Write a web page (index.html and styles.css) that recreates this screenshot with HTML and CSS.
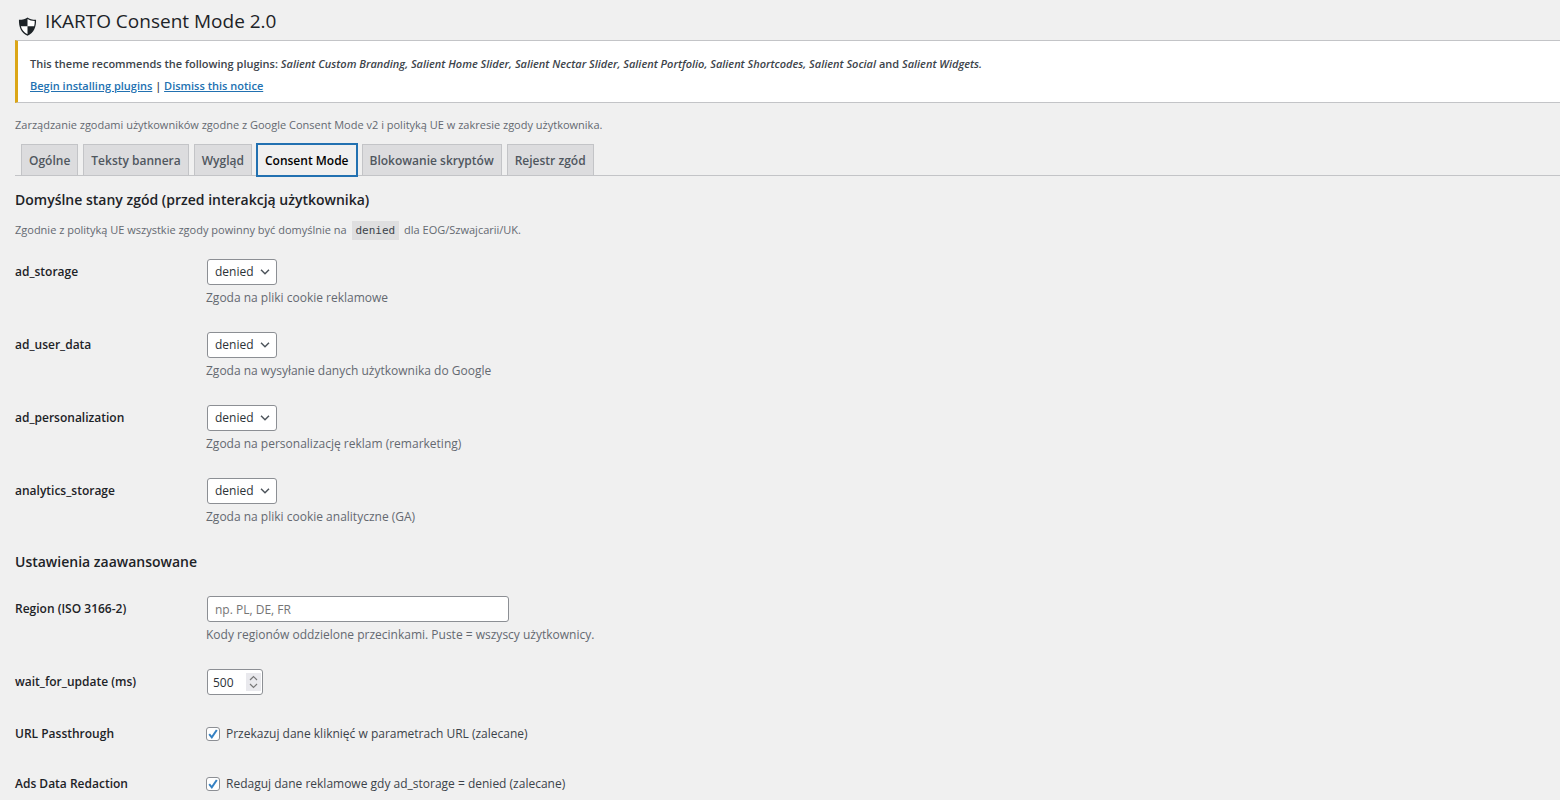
FILE: index.html
```html
<!DOCTYPE html>
<html lang="pl">
<head>
	<meta charset="utf-8">
	<title>IKARTO Consent Mode 2.0</title>
	<link rel="stylesheet" href="styles.css">
</head>
<body>
<div class="wrap">
	<h1 class="title">
		<svg class="shield" viewBox="0 0 20 20" aria-hidden="true">
			<path fill="#1d2327" d="M10 .5C8 2.200 5 3 1 3 .8 10.500 3 16.500 10 19.800 17 16.500 19.200 10.500 19 3 15 3 12 2.200 10 .5z"/>
			<path fill="#fff" d="M10 2.200c2 1.300 4.500 1.900 7.600 2 0 1.900-.1 3.800-.6 5.600h-7zM3 9.800h7v8.300C6.200 16.200 3.900 13.500 3 9.800z"/>
		</svg>
		IKARTO Consent Mode 2.0
	</h1>

	<div class="notice">
		<p>This theme recommends the following plugins: <em>Salient Custom Branding, Salient Home Slider, Salient Nectar Slider, Salient Portfolio, Salient Shortcodes, Salient Social</em> and <em>Salient Widgets.</em></p>
		<p><a href="#">Begin installing plugins</a> | <a href="#">Dismiss this notice</a></p>
	</div>

	<p class="intro">Zarządzanie zgodami użytkowników zgodne z Google Consent Mode v2 i polityką UE w zakresie zgody użytkownika.</p>

	<nav class="tabs">
		<a href="#" class="tab">Ogólne</a>
		<a href="#" class="tab">Teksty bannera</a>
		<a href="#" class="tab">Wygląd</a>
		<a href="#" class="tab tab-active">Consent Mode</a>
		<a href="#" class="tab">Blokowanie skryptów</a>
		<a href="#" class="tab">Rejestr zgód</a>
	</nav>

	<form>
		<h2>Domyślne stany zgód (przed interakcją użytkownika)</h2>
		<p class="intro">Zgodnie z polityką UE wszystkie zgody powinny być domyślnie na <code>denied</code> dla EOG/Szwajcarii/UK.</p>

		<div class="form-table">
			<div class="row">
				<label class="name" for="ad_storage">ad_storage</label>
				<div class="field">
					<select id="ad_storage"><option>denied</option><option>granted</option></select>
					<p class="desc">Zgoda na pliki cookie reklamowe</p>
				</div>
			</div>
			<div class="row">
				<label class="name" for="ad_user_data">ad_user_data</label>
				<div class="field">
					<select id="ad_user_data"><option>denied</option><option>granted</option></select>
					<p class="desc">Zgoda na wysyłanie danych użytkownika do Google</p>
				</div>
			</div>
			<div class="row">
				<label class="name" for="ad_personalization">ad_personalization</label>
				<div class="field">
					<select id="ad_personalization"><option>denied</option><option>granted</option></select>
					<p class="desc">Zgoda na personalizację reklam (remarketing)</p>
				</div>
			</div>
			<div class="row">
				<label class="name" for="analytics_storage">analytics_storage</label>
				<div class="field">
					<select id="analytics_storage"><option>denied</option><option>granted</option></select>
					<p class="desc">Zgoda na pliki cookie analityczne (GA)</p>
				</div>
			</div>
		</div>

		<h2>Ustawienia zaawansowane</h2>
		<div class="form-table">
			<div class="row">
				<label class="name" for="region">Region (ISO 3166-2)</label>
				<div class="field">
					<input type="text" id="region" placeholder="np. PL, DE, FR">
					<p class="desc">Kody regionów oddzielone przecinkami. Puste = wszyscy użytkownicy.</p>
				</div>
			</div>
			<div class="row">
				<label class="name" for="wait">wait_for_update (ms)</label>
				<div class="field">
					<input type="number" id="wait" value="500">
				</div>
			</div>
			<div class="row">
				<span class="name">URL Passthrough</span>
				<div class="field">
					<label class="check"><input type="checkbox" checked> Przekazuj dane kliknięć w parametrach URL (zalecane)</label>
				</div>
			</div>
			<div class="row">
				<span class="name">Ads Data Redaction</span>
				<div class="field">
					<label class="check"><input type="checkbox" checked> Redaguj dane reklamowe gdy ad_storage = denied (zalecane)</label>
				</div>
			</div>
		</div>
	</form>
</div>
</body>
</html>
```
FILE: styles.css
```css
html{overflow:hidden;}
body{margin:0;background:#f0f0f0;color:#3c434a;font:12px/18px "Open Sans","Noto Sans",sans-serif;}
h1,h2,p{margin:0;padding:0;}
h1,h2{color:#1d2327;}
a{color:#2271b1;}
.wrap{padding:8px 0 0 15px;}

.title{display:flex;gap:8px;height:32px;padding-left:3px;font-size:19px;line-height:26px;font-weight:400;}
.shield{width:19px;height:19px;margin-top:9px;}

.notice{background:#fff;border:1px solid #c3c4c7;border-left:3px solid #dba617;border-right:0;padding:14px 12px 3px;font-size:11px;font-weight:600;}
.notice p{margin-bottom:4px;}

.intro{color:#646970;font-size:11px;}
.notice + .intro{margin-top:13px;}
.intro code{background:#dfdfe0;padding:3px 4px;margin:0 2px;font:11px "DejaVu Sans Mono",monospace;color:#3c434a;}

.tabs{display:flex;gap:5px;margin-top:10px;padding-left:6px;border-bottom:1px solid #c3c4c7;}
.tab{padding:5px 7px 4px;background:#dcdcde;border:1px solid #c3c4c7;border-bottom:0;color:#50575e;font-size:12px;line-height:21px;font-weight:600;text-decoration:none;}
.tab-active{background:#f0f0f0;color:#000;border-color:#f0f0f0;margin-bottom:-1px;outline:2px solid #2271b1;outline-offset:-1px;}

h2{font-size:14px;line-height:20px;font-weight:600;}
form{padding-top:14px;}
form .intro{margin-top:11px;}
.form-table{margin:7px 0 14px;}
h2 + .form-table{margin-top:11px;}
.row{display:grid;grid-template-columns:191px 1fr;}
.name{padding:17px 0 0;color:#1d2327;font-weight:600;}
.field{padding:13px 0;}
.desc{margin-top:4px;color:#646970;line-height:17px;}

select,input[type=text],input[type=number]{display:block;box-sizing:border-box;height:26px;margin:0 1px;border:1px solid #8c8f94;border-radius:3px;background:#fff;color:#2c3338;font:inherit;}
select{appearance:none;width:70px;padding:0 7px;background:#fff url('data:image/svg+xml,<svg xmlns="http://www.w3.org/2000/svg" width="10" height="6"><path d="M1 .8l4 4 4-4" fill="none" stroke="%2350575e" stroke-width="1.500"/></svg>') no-repeat right 6px center;}
input[type=text]{width:302px;padding:0 7px;}
input::placeholder{color:#757575;}
input[type=number]{appearance:textfield;width:56px;padding:0 5px;background:#fff url('data:image/svg+xml,<svg xmlns="http://www.w3.org/2000/svg" width="15" height="18"><path fill="%23e9e9ed" d="M0 0h15v18H0z"/><path d="M4 7l3.500-3.500L11 7M4 11l3.500 3.500L11 11" fill="none" stroke="%23777" stroke-width="1.200"/></svg>') no-repeat right 1px center;}
.check{display:flex;align-items:center;gap:6px;line-height:26px;margin-bottom:-2px;}
.check input{appearance:none;width:14px;height:14px;margin:0;border:1px solid #8c8f94;border-radius:3px;background:#fff url('data:image/svg+xml,<svg xmlns="http://www.w3.org/2000/svg" width="12" height="12"><path d="M2.200 6.200l2.600 3.200L9.800 2" fill="none" stroke="%233582c4" stroke-width="2"/></svg>') no-repeat center;}
```
